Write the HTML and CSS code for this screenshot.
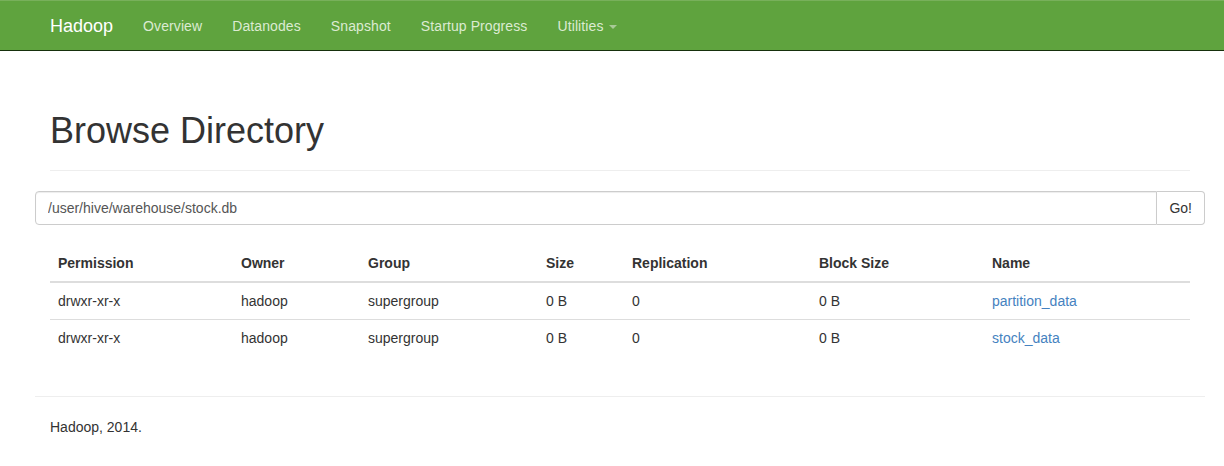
FILE: index.html
```html
<!DOCTYPE html>
<html>
<head>
<meta charset="utf-8">
<title>Browsing HDFS</title>
<link rel="stylesheet" href="styles.css">
</head>
<body>
<header class="navbar">
  <div class="container nav-inner">
    <a class="brand" href="#">Hadoop</a>
    <ul class="nav">
      <li><a href="#">Overview</a></li>
      <li><a href="#">Datanodes</a></li>
      <li><a href="#">Snapshot</a></li>
      <li><a href="#">Startup Progress</a></li>
      <li><a href="#">Utilities <span class="caret"></span></a></li>
    </ul>
  </div>
</header>
<main class="container main">
  <div class="page-header">
    <h1>Browse Directory</h1>
  </div>
  <div class="row">
    <form class="input-group">
      <input class="form-control" type="text" value="/user/hive/warehouse/stock.db">
      <button class="btn" type="button">Go!</button>
    </form>
  </div>
  <table class="table">
    <colgroup>
      <col style="width:183px"><col style="width:127px"><col style="width:178px"><col style="width:86px"><col style="width:187px"><col style="width:173px"><col style="width:206px">
    </colgroup>
    <thead>
      <tr><th>Permission</th><th>Owner</th><th>Group</th><th>Size</th><th>Replication</th><th>Block Size</th><th>Name</th></tr>
    </thead>
    <tbody>
      <tr><td>drwxr-xr-x</td><td>hadoop</td><td>supergroup</td><td>0 B</td><td>0</td><td>0 B</td><td><a href="#">partition_data</a></td></tr>
      <tr><td>drwxr-xr-x</td><td>hadoop</td><td>supergroup</td><td>0 B</td><td>0</td><td>0 B</td><td><a href="#">stock_data</a></td></tr>
    </tbody>
  </table>
  <div class="row">
    <hr class="rule">
  </div>
  <footer class="footer">Hadoop, 2014.</footer>
</main>
</body>
</html>
```

FILE: styles.css
```css
* { box-sizing: border-box; }
html, body { margin: 0; padding: 0; }
body {
  font-family: "Liberation Sans", Arial, Helvetica, sans-serif;
  font-size: 14px;
  line-height: 20px;
  color: #333;
  background: #fff;
}
a { color: #4582c0; text-decoration: none; }

.container {
  width: 1170px;
  margin-left: 35px;
  padding: 0 15px;
}
.main { display: flow-root; }
.row { margin: 0 -15px; display: flow-root; }

.navbar {
  background: #5fa33e;
  border-top: 1px solid #78b05b;
  border-bottom: 1px solid #16300c;
  height: 51px;
  margin-bottom: 20px;
}
.nav-inner {
  display: flex;
  align-items: stretch;
  height: 49px;
}
.brand {
  display: block;
  margin-left: -15px;
  padding: 15px;
  font-size: 18px;
  line-height: 20px;
  color: #fff;
}
.nav {
  display: flex;
  list-style: none;
  margin: 0;
  padding: 0;
}
.nav li a {
  display: block;
  padding: 15px;
  line-height: 20px;
  color: #dcebd2;
  letter-spacing: 0.1px;
}
.caret {
  display: inline-block;
  width: 0;
  height: 0;
  margin-left: 2px;
  vertical-align: middle;
  border-top: 4px solid #a9ca97;
  border-left: 4px solid transparent;
  border-right: 4px solid transparent;
}

.page-header {
  margin: 40px 0 20px;
  padding-bottom: 9px;
  border-bottom: 1px solid #eee;
}
.page-header h1 {
  margin: 0 0 10px;
  font-size: 36px;
  font-weight: 500;
  line-height: 1.1;
  color: #333;
}

.input-group {
  display: flex;
  margin: 0;
}
.form-control {
  flex: 1;
  height: 34px;
  padding: 6px 12px;
  font-family: inherit;
  font-size: 14px;
  color: #555;
  border: 1px solid #ccc;
  border-radius: 4px 0 0 4px;
  box-shadow: inset 0 1px 1px rgba(0,0,0,0.075);
  outline: none;
}
.btn {
  height: 34px;
  padding: 6px 12px;
  font-family: inherit;
  font-size: 14px;
  line-height: 20px;
  color: #333;
  background: #fff;
  border: 1px solid #ccc;
  border-left: 0;
  border-radius: 0 4px 4px 0;
}

.table {
  width: 1140px;
  margin: 20px 0 20px;
  border-collapse: collapse;
  border-spacing: 0;
  table-layout: fixed;
}
.table th, .table td {
  padding: 8px;
  line-height: 20px;
  text-align: left;
  vertical-align: top;
}
.table th {
  font-weight: bold;
  border-bottom: 2px solid #ddd;
}
.table td {
  border-top: 1px solid #ddd;
}

.rule {
  margin: 20px 0;
  border: 0;
  border-top: 1px solid #eee;
}
.footer {
  line-height: 20px;
}
```
